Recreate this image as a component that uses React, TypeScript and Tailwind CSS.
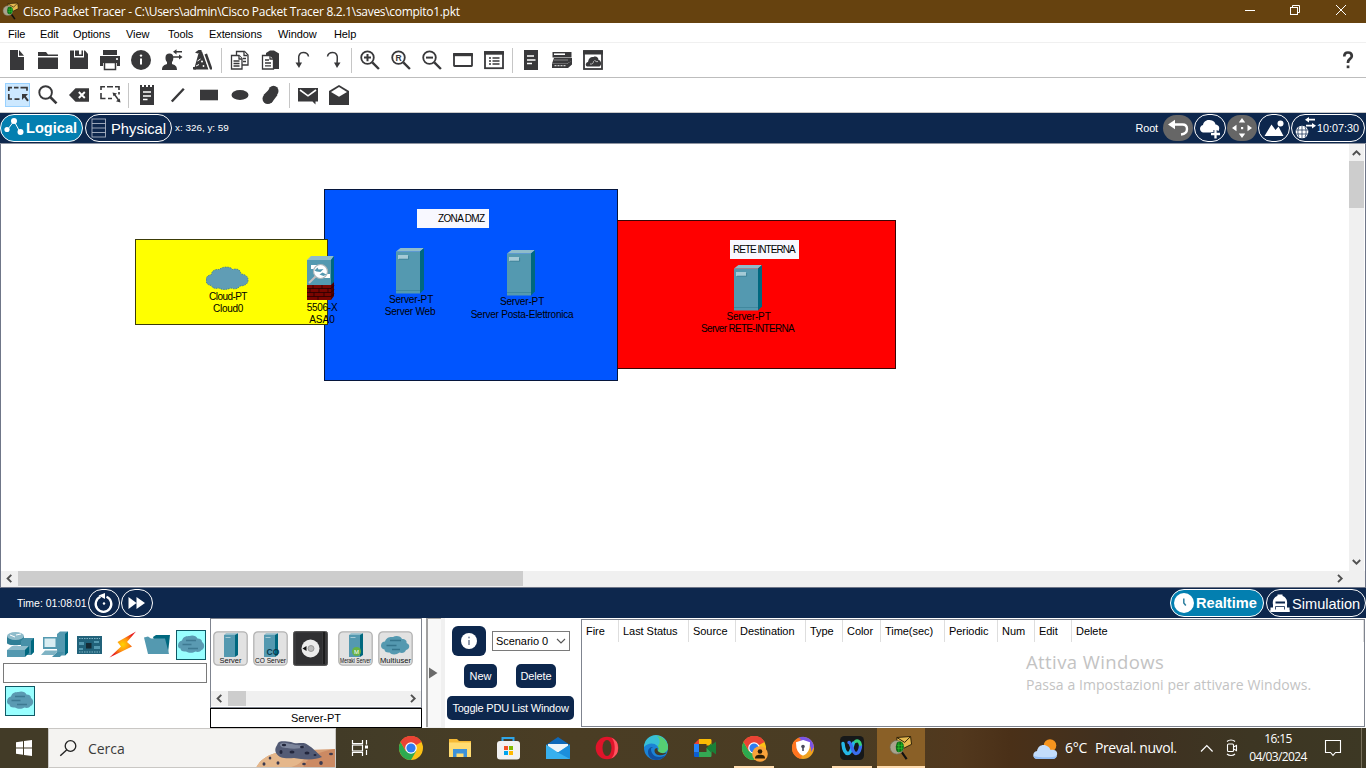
import React from "react";

const INK = "#38383a";

type ArtProps = {
  x: number;
  y: number;
  w: number;
  h: number;
  className?: string;
  children: React.ReactNode;
};

/* A drawing whose view box starts at (x, y), so that its shapes use scene coordinates. */
function Art({ x, y, w, h, className = "", children }: ArtProps) {
  return (
    <svg
      width={w}
      height={h}
      viewBox={`${x} ${y} ${w} ${h}`}
      className={`block shrink-0 ${className}`}
      fill="none"
    >
      {children}
    </svg>
  );
}

const Tool = ({ x, y = 45, children }: { x: number; y?: number; children: React.ReactNode }) => (
  <Art x={x} y={y} w={31} h={31}>
    {children}
  </Art>
);

const Sep = () => (
  <div className="flex w-[6px] shrink-0 pl-[2px]">
    <div className="h-[25px] w-px bg-[#c6c6c6]" />
  </div>
);

function Packet({ x, y, s = 1 }: { x: number; y: number; s?: number }) {
  return (
    <g transform={`translate(${x} ${y}) scale(${s})`}>
      <path d="M7 1L21 0L22 8L12 13L7 10z" fill="#e5b94f" stroke="#2d2008" strokeWidth="1" />
      <path d="M7 1L15 6L21 0" stroke="#2d2008" strokeWidth="1" />
      <path d="M12 16L17 23" stroke="#111" strokeWidth="2.2" />
      <circle cx="7" cy="11" r="7" fill="#a9a28c" stroke="#6f6a55" strokeWidth=".7" />
      <path d="M7 6c4-2 7 0 7 4s-2 6-5 6-3-3-3-6z" fill="#0d6b17" />
      <path d="M9 6v10M12 6v9M7 9h7M7 12h6" stroke="#2bd02b" strokeWidth=".7" />
    </g>
  );
}

function TitleBar() {
  return (
    <div className="flex h-[23px] items-center bg-[#66420f] text-white">
      <Art x={0} y={0} w={23} h={23}>
        <Packet x={3} y={3} s={0.7} />
      </Art>
      <div className="whitespace-nowrap font-['Open_Sans',sans-serif] text-[12px] leading-[23px] tracking-[-0.3px]">
        Cisco Packet Tracer - C:\Users\admin\Cisco Packet Tracer 8.2.1\saves\compito1.pkt
      </div>
      <Art x={1230} y={0} w={136} h={23} className="ml-auto">
        <g stroke="#fff" strokeWidth="1">
          <path d="M1245 10.5h10" />
          <rect x="1290.5" y="7.5" width="7" height="7" />
          <path d="M1292.5 7.5v-2h7v7h-2" />
          <path d="M1336 5l10 10M1346 5l-10 10" />
        </g>
      </Art>
    </div>
  );
}

function MenuBar() {
  return (
    <div className="flex h-[20px] items-center border-b border-[#f0f0f0] pl-[8px] pt-[2px] text-[11px] leading-[16px] tracking-[-0.1px] text-black">
      <span className="w-[32px]">File</span>
      <span className="w-[33px]">Edit</span>
      <span className="w-[53px]">Options</span>
      <span className="w-[42px]">View</span>
      <span className="w-[41px]">Tools</span>
      <span className="w-[69px]">Extensions</span>
      <span className="w-[56px]">Window</span>
      <span>Help</span>
    </div>
  );
}

function Zoomer({ cx, children }: { cx: number; children: React.ReactNode }) {
  return (
    <g>
      <circle cx={cx} cy={57.6} r={6.3} stroke={INK} strokeWidth="1.8" />
      <path d={`M${cx + 4.8} 62.4l6.6 6.6`} stroke={INK} strokeWidth="2.4" />
      {children}
    </g>
  );
}

function MainToolbar() {
  return (
    <div className="flex h-[35px] items-center border-b border-[#bdbdbd] pl-[2px]">
      <Tool x={2}>
        <path d="M10 50h8v7h6v13H10z" fill={INK} />
        <path d="M19 50l5 5.8h-5z" fill={INK} />
      </Tool>
      <Tool x={33}>
        <path d="M38 52h8l2 2.5h10V56H38zM38 57.5h20V69H38z" fill={INK} />
      </Tool>
      <Tool x={64}>
        <path d="M70 50.5h4v7h10v-7h1l3 3.5V69H70zM75 50.5h4v4h2.500v-4h1.500V56h-8z" fill={INK} />
      </Tool>
      <Tool x={95}>
        <path d="M103 50h14v5h-14zM100 56h20v10h-3v-3h-14v3h-3z" fill={INK} />
        <path d="M104.500 62.500h11v7h-11z" fill="#fff" stroke={INK} strokeWidth="1.500" />
        <circle cx="117" cy="59" r="1.100" fill="#fff" />
      </Tool>
      <Tool x={126}>
        <circle cx="141" cy="60" r="10" fill={INK} />
        <path d="M141 58.500v6" stroke="#fff" strokeWidth="2" />
        <circle cx="141" cy="55.600" r="1.200" fill="#fff" />
      </Tool>
      <Tool x={157}>
        <path d="M162 70c0-4 2-5 5-6v-2c-1.500-1.500-1.500-3-1.500-4.500 0-2.500 1.500-4 4-4s3.800 1.500 3.800 4c0 1.500 0 3-1.300 4.500v2c3 1 5 2 5 6z" fill={INK} />
        <path d="M175 51.800h7M173 57h7" stroke={INK} strokeWidth="1.500" />
        <path d="M173 51.800l3.500-2.600v5.200zM182.500 57l-3.500-2.600v5.200z" fill={INK} />
      </Tool>
      <Tool x={188}>
        <path d="M199 51.500h3l6.500 18H194z" fill={INK} />
        <path d="M195 52.500l3.500-2.500 3 0 0 2-4 1.500zM193 67h3v2.500h-3z" fill={INK} />
        <path d="M204.500 55l4.500 14.500M197.500 61l3-2M196 66l3-1.500" stroke="#fff" strokeWidth="1" />
        <path d="M204.500 54.500l2.500-1 5 14v2h-2z" fill={INK} />
        <circle cx="202" cy="61.500" r="1" fill="#fff" />
        <circle cx="203.500" cy="66" r=".9" fill="#fff" />
      </Tool>
      <Sep />
      <Tool x={225}>
        <g stroke={INK} strokeWidth="1.300" fill="#fff">
          <path d="M236.500 51.500h8l3.500 3.500v10h-11.500z" />
          <path d="M231.500 55.500h7.500l3 3v10.500h-10.500z" />
          <path d="M239 55.500v3.500h3M233.500 61h6M233.500 63.500h6M233.500 66h6M244 51.500v4h3.500M243 58.500h3M243 61.500h3" />
        </g>
      </Tool>
      <Tool x={256}>
        <path d="M266 53l4-2.500h4l5 3V69h-8V57l-5-1z" fill={INK} />
        <path d="M262.500 55.500h8l3 3v10.500h-11z" fill="#fff" stroke={INK} strokeWidth="1.300" />
        <path d="M270 55.500v3.500h3M265 60h4M265 63h6M265 65.800h6" stroke={INK} strokeWidth="1.300" />
      </Tool>
      <Tool x={287}>
        <path d="M308.500 56.500c-.5-3-3-4-5.200-4-3.300 0-5 2.500-4.600 6.500l.3 5" stroke={INK} strokeWidth="1.500" />
        <path d="M295.500 62.500h6.500l-3 5.500z" fill={INK} />
      </Tool>
      <Tool x={318}>
        <path d="M327.500 56.500c.5-3 3-4 5.200-4 3.300 0 5 2.500 4.600 6.500l-.3 5" stroke={INK} strokeWidth="1.500" />
        <path d="M340.500 62.500H334l3 5.500z" fill={INK} />
      </Tool>
      <Sep />
      <Tool x={355}>
        <Zoomer cx={367.500}>
          <path d="M367.500 54v7.200M364 57.600h7" stroke={INK} strokeWidth="2" />
        </Zoomer>
      </Tool>
      <Tool x={386}>
        <Zoomer cx={398.500}>
          <text x="395.600" y="60.900" fontSize="8.500" fontWeight="700" fontFamily="Liberation Sans, sans-serif" fill={INK}>R</text>
        </Zoomer>
      </Tool>
      <Tool x={417}>
        <Zoomer cx={429.500}>
          <path d="M426 57.600h7" stroke={INK} strokeWidth="2" />
        </Zoomer>
      </Tool>
      <Tool x={448}>
        <rect x="454" y="54" width="18" height="12" rx=".5" stroke={INK} strokeWidth="1.800" />
        <path d="M453 54.700h20" stroke={INK} strokeWidth="3" />
      </Tool>
      <Tool x={479}>
        <rect x="485" y="52" width="18" height="16.200" stroke={INK} strokeWidth="1.800" />
        <path d="M484 53h20" stroke={INK} strokeWidth="3.400" />
        <path d="M489 58h2M492.500 58h7M489 61h2M492.500 61h7M489 64h2M492.500 64h7" stroke={INK} strokeWidth="1.300" />
      </Tool>
      <Sep />
      <Tool x={516}>
        <rect x="524" y="50" width="14" height="20" fill={INK} />
        <path d="M527 56h7M527 60h8.500M527 63.500h5" stroke="#fff" strokeWidth="1.300" />
      </Tool>
      <Tool x={547}>
        <path d="M552.500 52h19v5.500h-19z" fill={INK} />
        <path d="M554 54.200h11" stroke="#fff" strokeWidth="1.600" />
        <path d="M554 58h18v3l-5 2.500h-15z" fill={INK} />
        <path d="M552 63.500h15.500l4.500-3v4l-4 3.500h-16z" fill={INK} />
        <path d="M554.500 65.700h11" stroke="#ccc" strokeWidth="1.200" strokeDasharray="2 1" />
        <path d="M554 60h14" stroke="#999" strokeWidth=".8" />
      </Tool>
      <Tool x={578}>
        <rect x="584" y="51" width="18" height="18" stroke={INK} strokeWidth="1.800" />
        <path d="M583 52.500h20" stroke={INK} strokeWidth="4" />
        <path d="M587 66.500c-2-1-1.500-4 1-4.500 .5-4 3-5.500 5.500-5 2.500-1.200 5 .5 5 3 3 .5 3.500 5 1 6.500z" fill={INK} />
        <path d="M590 64c2.500 .5 3.500-1 3.500-2.800M594.500 60c.8 1.500 2 2 3.500 1.500" stroke="#c4c4c4" strokeWidth=".9" />
      </Tool>
      <Art x={1330} y={45} w={36} h={31} className="ml-auto">
        <path d="M1344.300 56.500c0-2.700 1.300-4 3.700-4s3.800 1.300 3.800 3.400c0 3-3.800 3-3.800 6.300v.8" stroke={INK} strokeWidth="2.700" />
        <rect x="1346.700" y="65.500" width="2.700" height="2.700" fill={INK} />
      </Art>
    </div>
  );
}

function DrawToolbar() {
  return (
    <div className="flex h-[35px] items-center border-b border-[#c9c9c9] pl-[2px]">
      <Tool x={2} y={80}>
        <rect x="5.500" y="83.500" width="24" height="23" fill="#cce8ff" stroke="#99d1ff" />
        <path d="M8.800 91v-3.300H12M14 87.700h4.500M20.500 87.700H27v3M8.800 94v5h3.200M14.500 99.200h5" stroke={INK} strokeWidth="1.700" />
        <path d="M22 94h6l-2.200 2.300 3 4-1.600 1.300-3-4L22 100z" fill={INK} />
      </Tool>
      <Tool x={33} y={80}>
        <circle cx="45.600" cy="92.500" r="6.300" stroke={INK} strokeWidth="1.900" />
        <path d="M50.200 97l6.300 6.300" stroke={INK} strokeWidth="2.600" />
      </Tool>
      <Tool x={64} y={80}>
        <path d="M69 95l6.500-6.800H89v13.600H75.500z" fill={INK} />
        <path d="M78.800 92l6 6M84.800 92l-6 6" stroke="#fff" strokeWidth="1.900" />
      </Tool>
      <Tool x={95} y={80}>
        <path d="M101 90v-3.300h4M107 86.700h6M115 86.700h4V90M101 93v5.500h4.500M108 98.500h4M119 92v2.500" stroke={INK} strokeWidth="1.600" />
        <path d="M114.500 94.500l4 5.500" stroke={INK} strokeWidth="1.500" />
        <path d="M112.500 92.500l4.500 1-3.500 2.800zM120.500 102.500l-4.500-1.200 3.700-2.700z" fill={INK} />
      </Tool>
      <Sep />
      <Tool x={132} y={80}>
        <path d="M140 85h2v2h2v-2h2v2h2v-2h2v2h2v-2h2v20h-14z" fill={INK} />
        <path d="M143 92h8M143 96h8M143 99.500h4.500" stroke="#fff" strokeWidth="1.400" />
      </Tool>
      <Tool x={163} y={80}>
        <path d="M171.800 101.500l12-12.800" stroke={INK} strokeWidth="2.400" />
      </Tool>
      <Tool x={194} y={80}>
        <rect x="200" y="89.700" width="18" height="10.600" fill={INK} />
      </Tool>
      <Tool x={225} y={80}>
        <ellipse cx="240" cy="95" rx="8.500" ry="5" fill={INK} />
      </Tool>
      <Tool x={256} y={80}>
        <ellipse cx="267.800" cy="98.800" rx="5.300" ry="5.300" fill={INK} />
        <ellipse cx="273.500" cy="91" rx="5" ry="5.200" fill={INK} />
        <path d="M263.500 95l6-6 8 6-6 8z" fill={INK} />
      </Tool>
      <Sep />
      <Tool x={293} y={80}>
        <path d="M298 88h20v13.500h-2.500v3l-3-3H298z" fill={INK} />
        <path d="M300 90l8 5.800 8-5.800" stroke="#fff" strokeWidth="1.600" />
      </Tool>
      <Tool x={324} y={80}>
        <path d="M329 91l10-6 10 6v14h-20z" fill={INK} />
        <path d="M331 92l8-5 8 5-8 4.800z" fill="#fff" />
      </Tool>
    </div>
  );
}

function ModeBar() {
  return (
    <div className="flex h-[31px] items-center border-b border-[#8d93a0] bg-[#0d274d] text-white">
      <div className="flex h-[28px] w-[83px] shrink-0 items-center rounded-[14px] border border-white bg-[#037fb0]">
        <Art x={1} y={114} w={25} h={28}>
          <path d="M8 129l6-8 6 11" stroke="#fff" strokeWidth="1" />
          <circle cx="7" cy="129.500" r="2.600" fill="#fff" />
          <circle cx="14" cy="121" r="3" fill="#fff" />
          <circle cx="20.500" cy="132" r="3" fill="#fff" />
        </Art>
        <span className="pt-[2px] text-[14.6px] font-bold">Logical</span>
      </div>
      <div className="ml-[2px] flex h-[28px] w-[87px] shrink-0 items-center rounded-[14px] border border-white">
        <Art x={86} y={114} w={25} h={28}>
          <rect x="92" y="119" width="13.500" height="18" stroke="#a9b3c4" strokeWidth=".9" />
          <path d="M92 123.500h14M92 128h14M92 132.500h14" stroke="#a9b3c4" strokeWidth=".9" />
        </Art>
        <span className="pt-[2px] text-[14.8px]">Physical</span>
      </div>
      <span className="ml-[3px] text-[9.9px]">x: 326, y: 59</span>
      <span className="ml-auto text-[10.8px] tracking-[-0.1px]">Root</span>
      <div className="ml-[5px] h-[26px] w-[30px] shrink-0 rounded-[13px] bg-[#666]">
        <Art x={1163} y={115} w={30} h={26}>
          <path d="M1173 124.500h9.500c3 0 4.500 2 4.500 4.500 0 3.500-2 5-6 5.500" stroke="#fff" strokeWidth="2.400" />
          <path d="M1168 124.500l7-4.800v9.600z" fill="#fff" />
        </Art>
      </div>
      <div className="ml-[1px] h-[28px] w-[32px] shrink-0 rounded-[14px] border border-white">
        <Art x={1195} y={114} w={30} h={26}>
          <path d="M1203 131.500c-4-1-4-6.500 0-7.500.5-3 3-5.500 6.500-5 4 .3 5.500 2 6 4.500 4 .5 4.500 4 3 6.500l-8 1.500z" fill="#fff" />
          <path d="M1215.500 129v8M1211.500 133h8.500" stroke="#0d274d" strokeWidth="4" />
          <path d="M1215.500 129v8.500M1211 133h9" stroke="#fff" strokeWidth="2.300" />
        </Art>
      </div>
      <div className="ml-[1px] h-[26px] w-[30px] shrink-0 rounded-[13px] bg-[#666]">
        <Art x={1227} y={115} w={30} h={26}>
          <path d="M1242 118l3.200 4.500h-6.400zM1242 138l3.200-4.500h-6.400zM1232 128l4.500-3.200v6.400zM1252 128l-4.500-3.200v6.400z" fill="#fff" />
          <rect x="1241" y="127" width="2.200" height="2.200" fill="#fff" />
        </Art>
      </div>
      <div className="ml-[1px] h-[28px] w-[32px] shrink-0 rounded-[14px] border border-white">
        <Art x={1259} y={115} w={30} h={26}>
          <path d="M1264.500 136l7-11.500 4 5.500 3-3.500 5 9.500z" fill="#fff" />
          <circle cx="1280.500" cy="123.500" r="3" fill="#fff" />
        </Art>
      </div>
      <div className="ml-[1px] mr-[1px] flex h-[28px] w-[74px] shrink-0 items-center rounded-[14px] border border-white">
        <Art x={1292} y={115} w={25} h={26}>
          <circle cx="1302" cy="132" r="6.300" fill="#fff" />
          <path d="M1296 130h12M1296 134h12M1302 126v12M1299 127c-1.500 3-1.500 7 0 10M1305 127c1.500 3 1.500 7 0 10" stroke="#0d274d" strokeWidth=".7" />
          <path d="M1307 119.700h8M1306 125.700h7" stroke="#fff" strokeWidth="1.700" />
          <path d="M1305 119.700l4-2.700v5.400zM1316 125.700l-4-2.700v5.400z" fill="#fff" />
        </Art>
        <span className="text-[10.8px]">10:07:30</span>
      </div>
    </div>
  );
}

function ServerBody() {
  return (
    <>
      <path d="M0 3.500h24v42H0z" fill="#5499b0" />
      <path d="M0 3.500L4.500 0H28l-4 3.500z" fill="#8fbccb" />
      <path d="M24 3.500L28 0v41.500l-4 4z" fill="#00687f" />
      <path d="M2 7h10v4H2z" fill="#a5cad6" />
      <path d="M3 11.200h9.600V8" stroke="#3b7f96" strokeWidth=".8" />
      <path d="M0 42.500h24" stroke="#3f869c" strokeWidth=".9" />
    </>
  );
}

const caption =
  "flex flex-col items-center whitespace-nowrap text-[10px] leading-[12px] text-black";

function Workspace() {
  return (
    <div className="relative min-w-0 flex-1 overflow-hidden bg-white">
      <div className="absolute left-[323px] top-[45px] h-[192px] w-[294px] border border-[#06163d] bg-[#0055ff]" />
      <div className="absolute left-[616px] top-[76px] h-[149px] w-[279px] border border-[#3a0505] bg-[#ff0000]" />
      <div className="absolute left-[134px] top-[95px] h-[86px] w-[193px] border border-[#3c3c08] bg-[#ffff00]" />

      <div className="absolute left-[416px] top-[65px] h-[19px] w-[72px] whitespace-nowrap bg-[#f8f8ff] pl-[21px] text-[10px] leading-[19px] tracking-[-0.65px] text-black">
        ZONA DMZ
      </div>
      <div className="absolute left-[729px] top-[96px] h-[19px] w-[69px] whitespace-nowrap bg-[#f8f8ff] pl-[3px] text-[10px] leading-[19px] tracking-[-0.98px] text-black">
        RETE INTERNA
      </div>

      <div className="absolute left-[186px] top-[122px] flex w-[80px] flex-col items-center">
        <Art x={206} y={266} w={43} h={25}>
          <path
            d="M206 280c0-3 2-5 5.500-5.500 0-4 4-5.500 8-5 2-3 11-3.500 13 0 5-1.500 8 .5 8.500 4.500 6 .5 7.500 4 7 7-.5 3.500-4 5-8 5-2 3-6 3.500-9 2-5 2-9 2-12 0-4 1-7 0-7.500-2.500-3.500 0-5.500-2.500-5.500-5.500z"
            fill="#609db5"
            stroke="#40788c"
            strokeWidth=".8"
            strokeDasharray="1.500 1"
          />
        </Art>
        <div className={`${caption} pl-[2px]`}>
          <span className="tracking-[-0.55px]">Cloud-PT</span>
          <span className="tracking-[-0.3px]">Cloud0</span>
        </div>
      </div>

      <div className="absolute left-[280px] top-[112px] flex w-[80px] flex-col items-center">
        <Art x={307} y={256} w={28} h={45}>
          <path d="M307 260h24v26h-24z" fill="#5499b0" />
          <path d="M307 260l4-4h23l-3 4z" fill="#8fbccb" />
          <path d="M331 260l3-4v26l-3 4z" fill="#00687f" />
          <path d="M307 285h24v15h-24z" fill="#7a0500" />
          <path d="M331 285l3-3v14l-3 4z" fill="#500000" />
          <path d="M307 288.500h24l3-3M307 292.500h24l3-3M307 296.500h24l3-3M313 285v3.500M322 285v3.500M310 288.500v4M319 288.500v4M328 288.500v4M314 292.500v4M324 292.500v4M318 296.500v3.500" stroke="#260000" strokeWidth=".8" />
          <path d="M311 265h9v4h-9zM324 274h6v4h-6z" fill="#fff" />
          <circle cx="320.500" cy="271.500" r="7" fill="#fff" stroke="#aab5b8" strokeWidth="1.200" />
          <path d="M314.500 270.500l3-3 1 2 5-.5-3 3-4-.5M319.500 274.500l3-2 4 2-3 1.500z" fill="#5499b0" />
          <path d="M315.500 276.500L309 283" stroke="#c6bebe" strokeWidth="2" />
        </Art>
        <div className={`${caption} mt-px pl-[2px]`}>
          <span className="tracking-[-0.25px]">5506-X</span>
          <span>ASA0</span>
        </div>
      </div>

      <div className="absolute left-[348px] top-[104px] flex w-[122px] flex-col items-center">
        <Art x={0} y={0} w={28} h={46}>
          <ServerBody />
        </Art>
        <div className={caption}>
          <span className="pl-[2px] tracking-[-0.15px]">Server-PT</span>
          <span className="tracking-[-0.2px]">Server Web</span>
        </div>
      </div>

      <div className="absolute left-[460px] top-[106px] flex w-[120px] flex-col items-center">
        <Art x={0} y={0} w={28} h={46}>
          <ServerBody />
        </Art>
        <div className={`${caption} pl-[2px]`}>
          <span className="tracking-[-0.15px]">Server-PT</span>
          <span className="pt-[1px] tracking-[-0.24px]">Server Posta-Elettronica</span>
        </div>
      </div>

      <div className="absolute left-[686px] top-[121px] flex w-[121px] flex-col items-center">
        <Art x={0} y={0} w={28} h={46}>
          <ServerBody />
        </Art>
        <div className={`${caption} -mt-px`}>
          <span className="pl-[2px] leading-[13px] tracking-[-0.15px]">Server-PT</span>
          <span className="tracking-[-0.7px]">Server RETE-INTERNA</span>
        </div>
      </div>
    </div>
  );
}

function CanvasArea() {
  return (
    <div className="flex h-[444px] flex-col border-b border-l border-r border-[#6f7688]">
      <div className="flex h-[427px]">
        <Workspace />
        <div className="w-[15px] shrink-0 bg-[#f0f0f0]">
          <Art x={1349} y={144} w={15} h={17}>
            <path d="M1352.800 155l3.700-3.700 3.700 3.700" stroke="#505050" strokeWidth="1.900" />
          </Art>
          <div className="h-[47px] bg-[#cdcdcd]" />
          <Art x={1349} y={208} w={15} h={363}>
            <path d="M1352.800 560l3.700 3.700 3.700-3.700" stroke="#505050" strokeWidth="1.900" />
          </Art>
        </div>
        <div className="w-px bg-white" />
      </div>
      <div className="flex h-[16px] bg-[#f0f0f0]">
        <Art x={1} y={571} w={17} h={16}>
          <path d="M11.300 574.800l-3.700 3.700 3.700 3.700" stroke="#505050" strokeWidth="1.900" />
        </Art>
        <div className="h-[15px] w-[505px] bg-[#cdcdcd]" />
        <Art x={1330} y={571} w={35} h={16} className="ml-auto">
          <path d="M1338 574.800l3.700 3.700-3.700 3.700" stroke="#505050" strokeWidth="1.900" />
        </Art>
      </div>
    </div>
  );
}

function TimeBar() {
  return (
    <div className="flex h-[30px] items-center bg-[#0d274d] text-white">
      <span className="ml-[17px] w-[71px] whitespace-nowrap pt-[1px] text-[10.500px]">Time: 01:08:01</span>
      <div className="h-[28px] w-[32px] shrink-0 rounded-[14px] border border-white">
        <Art x={89} y={590} w={30} h={26}>
          <path d="M100.500 596.800a7.800 7.800 0 1 0 6 0" stroke="#fff" strokeWidth="2.300" />
          <path d="M98.500 595.500l6.500-2.500v6z" fill="#fff" />
          <circle cx="104" cy="603.500" r="1.200" fill="#fff" />
        </Art>
      </div>
      <div className="ml-[1px] h-[28px] w-[32px] shrink-0 rounded-[14px] border border-white">
        <Art x={122} y={590} w={30} h={26}>
          <path d="M128.500 597l8 6-8 6zM136.500 597l8.500 6-8.500 6z" fill="#fff" />
        </Art>
      </div>
      <div className="ml-auto flex h-[28px] w-[94px] shrink-0 items-center rounded-[14px] border border-white bg-[#037fb0]">
        <Art x={1171} y={590} w={25} h={26}>
          <circle cx="1184" cy="603" r="10" fill="#fff" />
          <path d="M1183.800 598.500v4.500l2 2.500" stroke="#2d7f9f" strokeWidth="1.500" />
        </Art>
        <span className="pt-[2px] text-[14.6px] font-bold">Realtime</span>
      </div>
      <div className="ml-[2px] flex h-[28px] w-[100px] shrink-0 items-center rounded-[14px] border border-white">
        <Art x={1267} y={590} w={25} h={26}>
          <path d="M1273 605c-1-6 2-9 7-10 5 1 8 4 7 10v5h-14z" fill="#fff" />
          <path d="M1277.500 596v-1.500h5v1.500M1270.500 607.500h3v4.500h-3zM1286 607.500h3.500v4.500h-3.500z" fill="#fff" />
          <path d="M1270.500 611h19" stroke="#fff" strokeWidth="2" />
          <path d="M1275.500 602.500h9.500" stroke="#0d274d" strokeWidth="2" />
          <path d="M1275.500 609.500v-3h9v3" stroke="#0d274d" strokeWidth=".8" />
        </Art>
        <span className="pt-[3px] text-[14.6px]">Simulation</span>
      </div>
    </div>
  );
}

function CloudTile() {
  return (
    <svg width={30} height={30} viewBox="0 0 30 30" className="block shrink-0" fill="none">
      <rect x=".5" y=".5" width="29" height="29" fill="#99ffff" stroke="#0f5a66" />
      <path
        d="M2 15.500c0-3 2-4.500 4-5 1-4 5-4.500 7.500-4.500 3-1.500 7 0 8 2.500 3 0 4.500 1.500 4.500 3.500 3 1.500 3 7-.5 8-1 2-4 2.500-6 1.500-3 2-7 1.500-9.500 0-3.500.5-5.500-1-5.500-3-2 0-2.500-1.500-2.500-3z"
        fill="#5a9ab2"
      />
      <path d="M10 10.500h10M6.500 14.500h9M12 18.500h10" stroke="#3e7a92" strokeWidth="1.400" />
    </svg>
  );
}

function DeviceCategories() {
  return (
    <div className="flex h-[110px] w-[210px] shrink-0 flex-col bg-white">
      <div className="flex h-[45px] pt-[12px]">
        <Art x={0} y={630} w={39} h={30}>
          <path d="M7 636v7c0 3 17 3 17 0v-7z" fill="#2f7f96" />
          <ellipse cx="15.500" cy="636" rx="8.500" ry="4" fill="#8fbccb" />
          <path d="M10 635l5 2M21 634l-5 1" stroke="#fff" strokeWidth="1" />
          <path d="M21 641l3-3h10v14l-3 3H21z" fill="#4790a8" />
          <path d="M31 641l3-3v14l-3 3z" fill="#00687f" />
          <path d="M7 650l5-4h17l-4 4z" fill="#8fbccb" />
          <path d="M7 650h18v7H7z" fill="#5499b0" />
          <path d="M25 650l4-4v7l-4 4z" fill="#00687f" />
        </Art>
        <Art x={39} y={630} w={33} h={30}>
          <path d="M57 634l3-2.500h8v21l-3 3h-8z" fill="#5499b0" />
          <path d="M65 634l3-2.500v21l-3 3z" fill="#00687f" />
          <path d="M43 637h14v12H43z" fill="#5499b0" />
          <path d="M44.500 638.500h11v8.500h-11z" fill="#d9edf2" />
          <path d="M41 655l4-4.500h13l-4 4.500z" fill="#7fb3c4" />
          <path d="M52 657l5-5h7l-4 5z" fill="#4790a8" />
        </Art>
        <Art x={72} y={630} w={34} h={30}>
          <rect x="77" y="636" width="25" height="18" fill="#21627a" />
          <path d="M79 638.500h21M79 652h21" stroke="#7fb3c4" strokeWidth="1.200" strokeDasharray="1.500 1" />
          <rect x="86" y="643" width="5.500" height="5.500" fill="#152b35" />
          <path d="M79 642h5v3h-5zM94 641h5v2h-5zM94 646h6v3h-6zM79 648h4v2h-4z" fill="#5499b0" />
        </Art>
        <Art x={106} y={630} w={34} h={30}>
          <defs>
            <radialGradient id="bolt">
              <stop offset="0" stopColor="#ffd400" />
              <stop offset=".45" stopColor="#ff9a10" />
              <stop offset="1" stopColor="#e81c1c" />
            </radialGradient>
          </defs>
          <path d="M136 631.500L117.500 642l3.500 4.500-11.500 11L132 646.500l-5-4.500z" fill="url(#bolt)" />
        </Art>
        <Art x={140} y={630} w={36} h={30}>
          <path d="M153 637l3-2h14l-2 18-10-2z" fill="#00687f" />
          <path d="M144 637.500l4-1 3 2h14l4 15.500h-21z" fill="#5499b0" />
        </Art>
        <CloudTile />
      </div>
      <div className="ml-[3px] h-[20px] w-[204px] border border-[#7a7a7a] bg-white" />
      <div className="ml-[5px] mt-[3px]">
        <CloudTile />
      </div>
    </div>
  );
}

function DeviceCard({ label, kind }: { label: string; kind: "plain" | "co" | "meraki" | "cloud" }) {
  return (
    <svg width={35} height={35} viewBox="0 0 35 35" className="block shrink-0 overflow-visible" fill="none">
      <rect x=".8" y=".8" width="33.400" height="33.400" rx="4" fill="#e2e2e2" stroke="#b3b3b3" strokeWidth="1.300" />
      {kind === "cloud" ? (
        <>
          <path d="M3 14.500c0-2.500 2-4 4-4 1-4 5-5 8-4.500 3-2 8-1 9 2 3.500 0 5 2 4.500 4 4 1.500 3.500 6-.5 7-1 3-4 3.500-6.500 2.500-3 2.500-8 2.500-10 0-3 .5-5-1-5-3-2.500-.5-3.500-2-3.500-4z" fill="#5499b0" />
          <path d="M12 9.500h11M8.500 14.500h10M14 18.500h8" stroke="#34758c" strokeWidth="1.300" />
        </>
      ) : (
        <>
          <path d="M11 4l2-1.800h12L23 4z" fill="#8fbccb" />
          <path d="M11 4h11v22H11z" fill="#5499b0" />
          <path d="M22 4l3-1.800V24l-3 2z" fill="#00687f" />
          <path d="M12.500 6.500h5" stroke="#a5cad6" />
        </>
      )}
      {kind === "co" && (
        <text x="13.500" y="24" fontSize="8.500" fontWeight="700" fontFamily="Liberation Sans, sans-serif" fill="#073a4c">CO</text>
      )}
      {kind === "meraki" && (
        <>
          <circle cx="18.500" cy="20.500" r="4.500" fill="#67b346" />
          <text x="16" y="22.800" fontSize="6" fontFamily="Liberation Sans, sans-serif" fill="#fff">M</text>
        </>
      )}
      <text
        x={kind === "plain" ? 6.500 : 2}
        y="31.500"
        fontSize={kind === "meraki" ? 7 : 7.800}
        fontFamily="Liberation Sans, sans-serif"
        fill="#111"
        textLength={kind === "plain" ? 22 : 31}
        lengthAdjust="spacingAndGlyphs"
      >
        {label}
      </text>
    </svg>
  );
}

function DeviceList() {
  return (
    <div className="flex h-[110px] w-[212px] shrink-0 flex-col bg-white">
      <div className="flex h-[90px] flex-col border border-[#7f848f]">
        <div className="flex h-[72px] pl-[2px] pt-[12px]">
          <DeviceCard label="Server" kind="plain" />
          <div className="w-[5px]" />
          <DeviceCard label="CO Server" kind="co" />
          <div className="w-[5px]" />
          <svg width={35} height={35} viewBox="0 0 35 35" className="block shrink-0" fill="none">
            <rect x=".500" y=".500" width="34" height="34" rx="2" fill="#39393b" stroke="#555" />
            <path d="M3 2h26v31H3z" fill="#303032" />
            <path d="M31 1v32" stroke="#151515" strokeWidth="1.500" />
            <circle cx="17.500" cy="17.500" r="9" fill="#ececec" />
            <path d="M9.500 17.500l4-2.500v5z" fill="#111" />
            <circle cx="18" cy="17.500" r="3" fill="#bbb" stroke="#8a8a8a" strokeWidth=".8" />
          </svg>
          <div className="w-[10px]" />
          <DeviceCard label="Meraki Server" kind="meraki" />
          <div className="w-[5px]" />
          <DeviceCard label="Multiuser" kind="cloud" />
        </div>
        <div className="flex h-[15px] bg-[#f0f0f0]">
          <Art x={211} y={691} w={17} h={15}>
            <path d="M221.300 694.800l-3.700 3.700 3.700 3.700" stroke="#505050" strokeWidth="1.900" />
          </Art>
          <div className="w-[18px] bg-[#cdcdcd]" />
          <Art x={401} y={691} w={20} h={15} className="ml-auto">
            <path d="M411 694.800l3.700 3.700-3.700 3.700" stroke="#505050" strokeWidth="1.900" />
          </Art>
        </div>
      </div>
      <div className="flex h-[20px] items-center justify-center border border-black text-[11px] text-black">
        Server-PT
      </div>
    </div>
  );
}

const navyButton =
  "flex items-center justify-center whitespace-nowrap rounded-[5px] bg-[#0d274d] text-[11px] text-white";

function ScenarioPanel() {
  return (
    <div className="flex w-[136px] shrink-0 flex-col bg-white pl-[2px]">
      <div className="mt-[7px] flex h-[31px] items-center pl-[5px]">
        <div className="flex h-[30px] w-[34px] items-center justify-center rounded-[6px] bg-[#0d274d]">
          <svg width={18} height={18} viewBox="0 0 18 18" fill="none">
            <circle cx="9" cy="9" r="8" fill="#fff" />
            <path d="M9 8v5" stroke="#8791a5" strokeWidth="1.800" />
            <circle cx="9" cy="5.500" r="1" fill="#8791a5" />
          </svg>
        </div>
        <div className="ml-[6px] flex h-[20px] w-[78px] items-center whitespace-nowrap border border-[#7a7a7a] pl-[3px] text-[11px] tracking-[-0.05px] text-black">
          <span className="pt-[1px]">Scenario 0</span>
          <svg width={10} height={8} viewBox="0 0 10 8" className="ml-auto mr-[3px]" fill="none">
            <path d="M1 2l4 4 4-4" stroke="#555" strokeWidth="1.100" />
          </svg>
        </div>
      </div>
      <div className="mt-[8px] flex pl-[17px]">
        <div className={`${navyButton} h-[24px] w-[33px]`}>New</div>
        <div className={`${navyButton} ml-[19px] h-[24px] w-[40px] tracking-[-0.1px]`}>Delete</div>
      </div>
      <div className={`${navyButton} mt-[8px] h-[24px] w-[127px] tracking-[-0.22px]`}>Toggle PDU List Window</div>
    </div>
  );
}

const columns: { name: string; cls: string }[] = [
  { name: "Fire", cls: "w-[37px] pl-[4px]" },
  { name: "Last Status", cls: "w-[70px] pl-[4px]" },
  { name: "Source", cls: "w-[47px] pl-[4px]" },
  { name: "Destination", cls: "w-[70px] pl-[4px]" },
  { name: "Type", cls: "w-[37px] pl-[4px]" },
  { name: "Color", cls: "w-[38px] pl-[4px]" },
  { name: "Time(sec)", cls: "w-[64px] pl-[4px]" },
  { name: "Periodic", cls: "w-[53px] pl-[4px]" },
  { name: "Num", cls: "w-[37px] pl-[4px]" },
  { name: "Edit", cls: "w-[37px] pl-[4px]" },
  { name: "Delete", cls: "w-[292px] pl-[4px]" },
];

function PduTable() {
  return (
    <div className="mt-[1px] h-[108px] w-[784px] shrink-0 border border-[#7f848f] bg-white">
      <div className="flex h-[22px] text-[11px] leading-[23px] tracking-[-0.05px] text-black">
        {columns.map((c) => (
          <div key={c.name} className={`${c.cls} shrink-0 whitespace-nowrap border-r border-[#dedede]`}>
            {c.name}
          </div>
        ))}
      </div>
      <div className="ml-[444px] mt-[8px] whitespace-nowrap font-['Open_Sans',sans-serif] text-[#c3c3c3]">
        <div className="text-[18.500px] leading-[24px] tracking-[0.400px]">Attiva Windows</div>
        <div className="text-[14px] leading-[21px] tracking-[0.070px]">Passa a Impostazioni per attivare Windows.</div>
      </div>
    </div>
  );
}

function BottomPanel() {
  return (
    <div className="flex h-[110px] bg-white">
      <DeviceCategories />
      <DeviceList />
      <div className="ml-[4px] flex h-[110px] w-[19px] shrink-0 bg-[#f0f0f0]">
        <div className="h-[109px] w-[15px] border-l-2 border-t border-[#a0a0a0] bg-[#f8f8f8]">
          <Art x={428} y={619} w={12} h={108}>
            <path d="M429 667.500l8.500 5.500-8.500 5.500z" fill="#6a6a6a" />
          </Art>
        </div>
      </div>
      <ScenarioPanel />
      <PduTable />
    </div>
  );
}

function Chrome({ cx }: { cx: number }) {
  return (
    <g transform={`translate(${cx} 748)`}>
      <circle r="12" fill="#fbc116" />
      <path d="M0 0L-10.400-6A12 12 0 0 1 10.400-6z" fill="#ea4335" />
      <path d="M-10.400-6A12 12 0 0 0 0 12L5.200 3-5.200 3z" fill="#2da94f" />
      <path d="M0-6H10.400A12 12 0 0 0-10.400-6L-5.200 3z" fill="#ea4335" />
      <circle r="5.800" fill="#fff" />
      <circle r="4.600" fill="#2f7cf0" />
    </g>
  );
}

const TaskButton = ({
  x,
  active = false,
  lit = false,
  children,
}: {
  x: number;
  active?: boolean;
  lit?: boolean;
  children: React.ReactNode;
}) => (
  <div className={active ? "w-[48px] shrink-0 overflow-hidden bg-[#8a6027]" : "w-[49px] shrink-0"}>
    <Art x={x} y={728} w={49} h={38}>
      {children}
    </Art>
    {(lit || active) && (
      <div className={active ? "h-[2px] w-[48px] bg-[#ffdcae]" : "ml-[4px] h-[2px] w-[40px] bg-[#ffdcae]"} />
    )}
  </div>
);

function Taskbar() {
  return (
    <div className="flex h-[40px] bg-[linear-gradient(90deg,#423b27_0px,#423b27_336px,#433c27_380px,#4a3d24_560px,#4a3c23_860px,#52381d_960px,#4a3018_1010px,#3f3020_1120px,#3d3623_1250px,#3d3824_1366px)] font-['Open_Sans',sans-serif] text-white">
      <Art x={0} y={728} w={48} h={40}>
        <path d="M16 742.200l7-1v6.300h-7zM24 741l8-1.100v7.600h-8zM16 748.500h7v6.300l-7-1zM24 748.500h8v7.600l-8-1.100z" fill="#fff" />
      </Art>
      <div className="flex h-[40px] w-[288px] shrink-0 items-center border border-[#c9c7c4] bg-[#f4f3f1]">
        <Art x={49} y={729} w={39} h={38}>
          <circle cx="70.500" cy="746" r="5.300" stroke="#222" strokeWidth="1.300" />
          <path d="M66.600 750l-6.300 5.800" stroke="#222" strokeWidth="1.400" />
        </Art>
        <span className="text-[14px] tracking-[-0.050px] text-[#3b3b3b]">Cerca</span>
        <Art x={256} y={729} w={79} h={38} className="ml-auto">
          <path d="M256 768c3-7 11-13 20-15 20-4 40-3 59-4v20h-79z" fill="#d8a077" />
          <path d="M256 768c3-7 11-13 20-15 14-3 18-2 30-1 2 6-8 15-20 16z" fill="#e5b78b" />
          <path d="M303 768c2-8 12-16 32-19v19z" fill="#cc8a63" />
          <path d="M276 753c-2-5 1-7 2-10 3-3 9-1 13-1 6 3 12-1 17 3 5 3 7 6 14 12-6 3-18 3-28 1-9 1-15 0-18-5z" fill="#535b75" />
          <path d="M280 744c4-3 9 0 12 0 5 2 9 0 13 3-6 2-13 2-18 1-4 0-7-1-7-4z" fill="#7d869d" />
          <g fill="#22263c">
            <ellipse cx="284" cy="745" rx="2.200" ry="1.300" /><ellipse cx="292" cy="752" rx="2.500" ry="1.500" />
            <ellipse cx="302" cy="747" rx="2" ry="1.200" /><ellipse cx="307" cy="753" rx="2.500" ry="1.500" />
            <ellipse cx="281" cy="752" rx="1.500" ry="2" /><ellipse cx="315" cy="755" rx="1.500" ry="1" />
          </g>
          <g fill="#3c3a50">
            <ellipse cx="264" cy="764" rx="1.500" ry="1.800" /><ellipse cx="278" cy="763" rx="1.500" ry="1.800" />
            <ellipse cx="270" cy="758" rx="1.300" ry="1.500" /><ellipse cx="304" cy="764" rx="1.800" ry="1.300" />
            <ellipse cx="321" cy="763" rx="1.800" ry="2" /><ellipse cx="331" cy="754" rx="2" ry="1.300" />
          </g>
        </Art>
      </div>
      <Art x={336} y={728} w={51} h={40}>
        <g stroke="#fff" strokeWidth="1.200">
          <path d="M352.500 740v3.500h10V740M352.500 756v-3.500h10v3.500" />
          <rect x="352.500" y="745" width="10" height="6" />
          <path d="M366.500 740v4.500M366.500 750v5" />
        </g>
        <rect x="365" y="745.500" width="3" height="3" fill="#fff" />
      </Art>
      <TaskButton x={387}>
        <Chrome cx={411} />
      </TaskButton>
      <TaskButton x={436}>
        <path d="M449 739h8l2 2h12v16h-22z" fill="#f5b935" />
        <path d="M449 742.500h22V757h-22z" fill="#ffdc72" />
        <path d="M453 757v-8h14v8h-3.500v-3.500h-7v3.500z" fill="#3d92d9" />
      </TaskButton>
      <TaskButton x={485}>
        <path d="M502.500 742v-4h11v4" stroke="#2fa6e8" strokeWidth="2" />
        <rect x="497" y="741" width="23" height="18.500" rx="3" fill="#f1f1f1" />
        <path d="M504 746h4v4h-4z" fill="#f25022" />
        <path d="M509 746h4v4h-4z" fill="#7fba00" />
        <path d="M504 751h4v4h-4z" fill="#00a4ef" />
        <path d="M509 751h4v4h-4z" fill="#ffb900" />
      </TaskButton>
      <TaskButton x={534}>
        <path d="M546 745l12-8 12 8z" fill="#0f68b8" />
        <path d="M548 744h20v8h-20z" fill="#eef4f8" />
        <path d="M546 744.500l12 8 12-8V759h-24z" fill="#38b0ee" />
        <path d="M570 744.500l-12 8 12 6.500z" fill="#1c8edb" />
      </TaskButton>
      <TaskButton x={583}>
        <circle cx="607" cy="748" r="11.300" fill="#e0142a" />
        <path d="M611 737.500a11.300 11.300 0 0 1 0 21c5-3 5-18 0-21z" fill="#ff5560" />
        <ellipse cx="607" cy="748" rx="4.500" ry="8" fill="#493d24" />
      </TaskButton>
      <TaskButton x={632}>
        <circle cx="656" cy="748" r="12" fill="#1b83d6" />
        <path d="M644 747a12 12 0 0 1 24 0c0 4-3 6-6.500 6-3 0-4-1-4-2 1.500-1 2-3 0-5-4-4-10-3-13.500 1z" fill="#38bfd6" />
        <path d="M657 736a12 12 0 0 1 11 11c0 4-3 6-6.500 6-3 0-4-1-4-2 1.500-1 2-3 0-5 3-2 3-7-.5-10z" fill="#56cf72" />
        <path d="M651 749c0 6 6 10 13 7l2-1c-3 4-7 5-10 5-5 0-8-4-8-8 0-3 2-5 5-5-1 .5-2 1-2 2z" fill="#11509f" />
        <path d="M657.500 748c-1 4 4 6.500 9 4.500-2 4-12 4-12-2 0-1.500 1-2.500 3-2.500z" fill="#453c25" />
      </TaskButton>
      <TaskButton x={681}>
        <path d="M694 744l5-5v5z" fill="#ea4335" />
        <path d="M699 739h11c1 0 1.500.5 1.500 1.500v5h-5V744H699z" fill="#fbbc04" />
        <path d="M694 744h5v8.500h-5z" fill="#2684fc" />
        <path d="M694 752.500h5v4.500h-3.500c-1 0-1.500-.500-1.500-1.500z" fill="#0a5ed5" />
        <path d="M699 752h7.500v-4l5-1v8.500c0 1-.500 1.500-1.500 1.500h-11z" fill="#34a853" />
        <path d="M711.500 745l4.500-3.500v13l-4.500-3.500zM706.500 748l5-5v10z" fill="#188038" />
      </TaskButton>
      <TaskButton x={730} lit>
        <Chrome cx={754} />
        <circle cx="760" cy="754" r="7.800" fill="#f9a23a" />
        <circle cx="760" cy="751.500" r="2.300" fill="#2b1c05" />
        <path d="M755 758.500c0-3 2-3.800 5-3.800s5 .8 5 3.800z" fill="#2b1c05" />
      </TaskButton>
      <TaskButton x={779}>
        <circle cx="803" cy="748" r="11" fill="#f0a21e" />
        <path d="M798 738a11 11 0 0 1 16 9l-3 5c1-7-4-11-13-10z" fill="#7b55e6" />
        <path d="M792 748a11 11 0 0 1 7-10.300l2 2c-5 4-5 11 1 17l-2 2a11 11 0 0 1-8-10.700z" fill="#ff7420" />
        <path d="M803 741l6 2c0 7-2 10-6 11.500-4-1.500-6-5-6-11.500z" fill="#fff" stroke="#fff" strokeWidth="2" />
        <circle cx="803" cy="746.500" r="1.800" fill="#4b4b5b" />
        <path d="M803 747v4" stroke="#4b4b5b" strokeWidth="1.600" />
      </TaskButton>
      <TaskButton x={828} lit>
        <rect x="840" y="736" width="24" height="24" rx="4.500" fill="#161819" />
        <path d="M843 743.500c.5 6 2.500 10 5 10 3.500 0 4-8 5.500-10.500" stroke="#25b7e8" strokeWidth="3.400" strokeLinecap="round" />
        <path d="M849 742.500c2.500 0 3 11 7 11 3 0 4.500-5 4.500-8" stroke="#3a6df0" strokeWidth="3.400" strokeLinecap="round" />
        <path d="M855.500 741.500c2-1.500 4.500 0 4.800 3" stroke="#35cf7c" strokeWidth="3.200" strokeLinecap="round" />
      </TaskButton>
      <TaskButton x={877} active>
        <Packet x={890} y={736.500} s={0.98} />
      </TaskButton>
      <Art x={1030} y={728} w={34} h={40} className="ml-auto">
        <circle cx="1050" cy="745.500" r="6.300" fill="#f6941e" />
        <path d="M1037 759c-5-.5-5-7 0-8 1-5 5-7 9-5.500 3 1 4 3 4.500 4.500 5-1.500 7.500 2 6.500 5-.500 3-3 4-5 4z" fill="#c3dcfb" />
        <path d="M1033.500 756c4 1.500 19 2 23.500 0-1 2.500-3 3-5 3h-15c-2 0-3-1-3.500-3z" fill="#93bdf5" />
      </Art>
      <span className="ml-[1px] w-[30px] whitespace-nowrap text-[14px] leading-[40px] tracking-[-0.300px]">6°C</span>
      <span className="w-[105px] whitespace-nowrap text-[14px] leading-[40px] tracking-[-0.420px]">Preval. nuvol.</span>
      <Art x={1200} y={728} w={48} h={40}>
        <path d="M1201 751.500l5.800-5.800 5.800 5.800" stroke="#fff" strokeWidth="1.200" />
        <g stroke="#fff" strokeWidth="1.100">
          <rect x="1227.500" y="744" width="6" height="7.500" rx="1" />
          <path d="M1233.500 747l3-1.500v5l-3-1.500M1227 741.500c2-2 6-2 8 0M1227 754c2 2 6 2 8 0" />
        </g>
      </Art>
      <div className="flex w-[60px] flex-col items-center whitespace-nowrap pt-[2px] text-[12px] leading-[18px] tracking-[-0.600px]">
        <span>16:15</span>
        <span>04/03/2024</span>
      </div>
      <Art x={1308} y={728} w={58} h={40}>
        <path d="M1325.500 740.500h15v12h-5l-2.500 2.800-2.500-2.800h-5z" stroke="#fff" strokeWidth="1.100" />
        <path d="M1361.500 728v40" stroke="#77705c" strokeWidth="1" />
      </Art>
    </div>
  );
}

export default function App() {
  return (
    <div className="h-[768px] w-[1366px] overflow-hidden bg-white font-['Liberation_Sans',Arial,sans-serif]">
      <TitleBar />
      <MenuBar />
      <MainToolbar />
      <DrawToolbar />
      <ModeBar />
      <CanvasArea />
      <TimeBar />
      <BottomPanel />
      <Taskbar />
    </div>
  );
}
